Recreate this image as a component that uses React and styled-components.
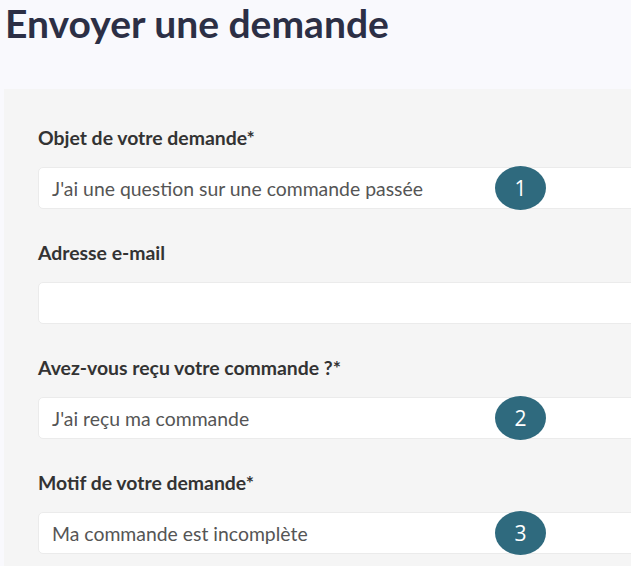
import React from "react";
import styled, { createGlobalStyle } from "styled-components";

const Global = createGlobalStyle`
  html, body { margin: 0; padding: 0; background: #ffffff; overflow: hidden; }
  body { font-family: Lato, "Open Sans", sans-serif; }
`;

const Page = styled.div`
  background: #f9f9fd;
  width: 631px;
  overflow: hidden;
`;

const Title = styled.h1`
  margin: 0;
  height: 89px;
  padding: 0 0 0 5px;
  box-sizing: border-box;
  font-family: Lato, sans-serif;
  font-weight: 700;
  font-size: 39px;
  line-height: 46px;
  color: #2c2f45;
  white-space: nowrap;
`;

const Panel = styled.div`
  margin-left: 4px;
  width: 720px;
  background: #f5f5f5;
  padding: 37px 0 12px 34px;
  box-sizing: border-box;
  display: flex;
  flex-direction: column;
  gap: 32px;
`;

const Field = styled.div`
  display: flex;
  flex-direction: column;
  gap: 17px;
`;

const Label = styled.label`
  font-family: Lato, sans-serif;
  font-weight: 700;
  font-size: 19.4px;
  line-height: 24px;
  color: #333333;
  white-space: nowrap;
`;

const Input = styled.div`
  position: relative;
  height: 42px;
  box-sizing: border-box;
  background: #ffffff;
  border: 1px solid #ebebeb;
  border-radius: 5px;
  display: flex;
  align-items: center;
  padding-left: 13px;
  font-family: Lato, sans-serif;
  font-size: 19.4px;
  color: #555555;
  white-space: nowrap;
`;

const Badge = styled.span`
  position: absolute;
  left: 456px;
  top: 50%;
  transform: translateY(-50%);
  width: 51px;
  height: 44px;
  border-radius: 50%;
  background: #2f6a7e;
  color: #ffffff;
  font-family: "Open Sans", Lato, sans-serif;
  font-size: 21px;
  display: flex;
  align-items: center;
  justify-content: center;
`;

const fields = [
  { label: "Objet de votre demande*", value: "J'ai une question sur une commande passée", badge: 1 },
  { label: "Adresse e-mail", value: "" },
  { label: "Avez-vous reçu votre commande ?*", value: "J'ai reçu ma commande", badge: 2 },
  { label: "Motif de votre demande*", value: "Ma commande est incomplète", badge: 3 },
];

export default function App() {
  return (
    <>
      <Global />
      <Page>
        <Title>Envoyer une demande</Title>
        <Panel>
          {fields.map((f) => (
            <Field key={f.label}>
              <Label>{f.label}</Label>
              <Input>
                {f.value}
                {f.badge && <Badge>{f.badge}</Badge>}
              </Input>
            </Field>
          ))}
        </Panel>
      </Page>
    </>
  );
}
